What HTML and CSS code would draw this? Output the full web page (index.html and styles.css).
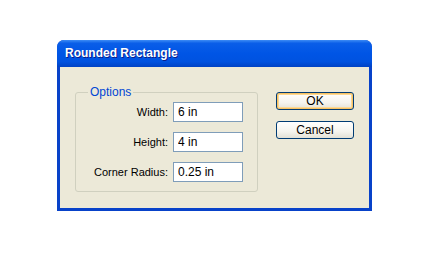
FILE: index.html
```html
<!DOCTYPE html>
<html lang="en">
<head>
    <meta charset="UTF-8">
    <meta name="viewport" content="width=device-width, initial-scale=1.0">
    <title>Rounded Rectangle</title>
    <link rel="stylesheet" href="styles.css">
</head>
<body>
    <div class="window">
        <div class="titlebar">Rounded Rectangle</div>
        <div class="content">
            <fieldset class="options">
                <legend>Options</legend>
                <div class="row">
                    <label for="w">Width:</label>
                    <input type="text" id="w" value="6 in">
                </div>
                <div class="row">
                    <label for="h">Height:</label>
                    <input type="text" id="h" value="4 in">
                </div>
                <div class="row">
                    <label for="r">Corner Radius:</label>
                    <input type="text" id="r" value="0.25 in">
                </div>
            </fieldset>
            <div class="buttons">
                <button class="default">OK</button>
                <button>Cancel</button>
            </div>
        </div>
    </div>
</body>
</html>
```

FILE: styles.css
```css
body {
    margin: 0;
    padding: 0;
    background-color: #fff;
    font-family: "Liberation Sans", Arial, sans-serif;
    font-size: 12px;
}
.window {
    width: 315px;
    height: 171px;
    margin: 40px 0 0 57px;
    display: flex;
    flex-direction: column;
    background-color: #0842c9;
    border-radius: 7px 7px 0 0;
    box-sizing: border-box;
}
.titlebar {
    height: 27px;
    line-height: 27px;
    padding-left: 8px;
    color: #fff;
    font-weight: bold;
    font-size: 12px;
    text-shadow: 1px 1px 0 #0a1e8c;
    border-radius: 7px 7px 0 0;
    background: linear-gradient(to bottom, #3d8cf5 0%, #0a5ee8 12%, #0055e5 50%, #0052e0 80%, #0042c4 100%);
}
.content {
    flex: 1;
    margin: 0 3px 3px 3px;
    background-color: #ece9d8;
    display: flex;
    align-items: flex-start;
    padding: 18px 0 0 15px;
}
.options {
    margin: 0;
    width: 183px;
    box-sizing: border-box;
    border: 1px solid #d0d0bf;
    border-radius: 3px;
    padding: 3px 14px 9px 12px;
    display: flex;
    flex-direction: column;
    gap: 10px;
}
.options legend {
    color: #0046d5;
    padding: 0 2px;
    line-height: 14px;
}
.row {
    display: flex;
    justify-content: flex-end;
    align-items: center;
    gap: 5px;
}
.row label {
    color: #000;
    font-size: 11px;
    white-space: nowrap;
}
.row input {
    width: 70px;
    height: 20px;
    flex-shrink: 0;
    box-sizing: border-box;
    border: 1px solid #7f9db9;
    padding: 0 4px;
    font-family: "Liberation Sans", Arial, sans-serif;
    font-size: 12px;
    background-color: #fff;
    outline: none;
}
.buttons {
    margin: 7px 0 0 18px;
    display: flex;
    flex-direction: column;
    gap: 11px;
}
button {
    width: 78px;
    height: 18px;
    padding: 0;
    font-family: "Liberation Sans", Arial, sans-serif;
    font-size: 12px;
    color: #000;
    border: 1px solid #003c74;
    border-radius: 3px;
    background: linear-gradient(to bottom, #fff 0%, #f5f4ee 60%, #e3e1d6 100%);
}
button.default {
    box-shadow: inset 0 0 0 1px #f8c264, inset 0 0 0 2px #fbd996;
}
```
